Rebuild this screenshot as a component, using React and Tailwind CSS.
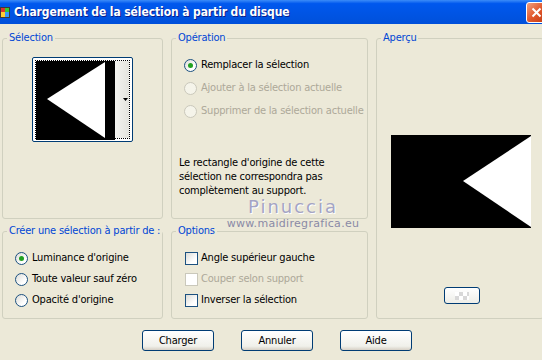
import React from 'react';

const font = { fontFamily: '"DejaVu Sans Condensed", "Liberation Sans", sans-serif' };

const Radio = ({ checked, disabled, label }) => (
  <div className={`flex items-center h-[16px] gap-[4px] whitespace-nowrap ${disabled ? 'text-[#ACA899]' : 'text-black'}`}>
    <span
      className={`w-[13px] h-[13px] rounded-full border flex items-center justify-center shrink-0 ${
        disabled
          ? 'border-[#CAC8BB] bg-[#F5F4EA]'
          : 'border-[#1C5180] bg-[linear-gradient(135deg,#DCDCD7,#FFFFFF_70%)]'
      }`}
    >
      {checked && <span className="w-[5px] h-[5px] rounded-full bg-[#21A121]" />}
    </span>
    <span>{label}</span>
  </div>
);

const Check = ({ disabled, label }) => (
  <div className={`flex items-center h-[16px] gap-[3px] whitespace-nowrap ${disabled ? 'text-[#ACA899]' : 'text-black'}`}>
    <span
      className={`w-[13px] h-[13px] border shrink-0 ${
        disabled
          ? 'border-[#CAC8BB] bg-white'
          : 'border-[#1C5180] bg-[linear-gradient(135deg,#DCDCD7,#FFFFFF_70%)]'
      }`}
    />
    <span>{label}</span>
  </div>
);

const Group = ({ title, className = '', children }) => (
  <fieldset className={`border border-[#D0D0BF] rounded-[3px] min-w-0 ${className}`}>
    <legend className="ml-[4px] px-[2px] text-[#0046D5] leading-[14px] whitespace-nowrap">{title}</legend>
    {children}
  </fieldset>
);

const XpButton = ({ children }) => (
  <button className="w-[72px] h-[21px] rounded-[3px] border border-[#003C74] bg-[linear-gradient(to_bottom,#FFFFFF,#F0F0EA_80%,#D6D0C5)] text-black leading-none">
    {children}
  </button>
);

export default function App() {
  return (
    <div className="w-[542px] h-[360px] overflow-hidden bg-[#ECE9D8] text-[11px] tracking-[-0.2px]" style={font}>
      {/* title bar */}
      <div className="h-[24px] flex items-center justify-between bg-[linear-gradient(to_bottom,#3C8CF8,#0058EE_15%,#0054E3_60%,#0050DA)]">
        <div className="flex items-center gap-[3px]">
          <svg width="11" height="13" viewBox="0 0 11 13">
            <rect x="0" y="1" width="10" height="11" fill="#3a3a3a" />
            <rect x="1" y="2" width="4" height="4" fill="#d33" />
            <rect x="5" y="2" width="4" height="4" fill="#3c3" />
            <rect x="1" y="6" width="4" height="5" fill="#fc3" />
            <rect x="5" y="6" width="4" height="5" fill="#39f" />
          </svg>
          <span
            className="text-white font-bold text-[12px] tracking-[-0.1px]"
            style={{ textShadow: '1px 1px #0A1E8C' }}
          >
            Chargement de la sélection à partir du disque
          </span>
        </div>
        <div className="w-[21px] h-[21px] mr-[-5px] rounded-[3px] border border-white bg-[linear-gradient(135deg,#F0A080,#E2582C_50%,#C13A12)] flex items-center justify-center">
          <svg width="11" height="11" viewBox="0 0 11 11">
            <path d="M1.5 1.5 L9.5 9.5 M9.5 1.5 L1.5 9.5" stroke="white" strokeWidth="2" />
          </svg>
        </div>
      </div>

      {/* body */}
      <div className="relative pt-[7px] pl-[2px]">
        <div className="grid grid-cols-[161px_197px_168px] grid-rows-[188px_95px] gap-x-[8px] gap-y-[5px]">
          <Group title="Sélection">
            <div className="ml-[29px] mt-[12px] w-[101px] h-[85px] rounded-[2px] border border-[#003C74] bg-white p-[2px]">
              <div className="w-full h-full border border-dotted border-black flex">
                <svg width="79" height="79" viewBox="0 0 79 79" className="shrink-0">
                  <rect width="79" height="79" fill="black" />
                  <polygon points="11,38 69,1 69,77" fill="white" />
                </svg>
                <div className="flex-1 bg-[linear-gradient(to_right,#F4F4F0,#E4E4DE)] flex items-center justify-end pr-[1px]">
                  <svg width="5" height="3" viewBox="0 0 5 3">
                    <polygon points="0,0 5,0 2.5,3" fill="black" />
                  </svg>
                </div>
              </div>
            </div>
          </Group>

          <Group title="Opération">
            <div className="ml-[12px] mt-[12px] flex flex-col gap-[7px]">
              <Radio checked label="Remplacer la sélection" />
              <Radio disabled label="Ajouter à la sélection actuelle" />
              <Radio disabled label="Supprimer de la sélection actuelle" />
            </div>
            <p className="ml-[7px] mt-[37px] leading-[14px] text-black whitespace-nowrap">
              Le rectangle d'origine de cette
              <br />
              sélection ne correspondra pas
              <br />
              complètement au support.
            </p>
          </Group>

          <Group title="Aperçu" className="row-span-2">
            <div className="flex flex-col items-center">
              <svg width="140" height="93" viewBox="0 0 140 93" className="mt-[90px] ml-[2px]">
                <rect width="140" height="93" fill="black" />
                <polygon points="140,1 72,46 140,92" fill="white" />
              </svg>
              <div className="mt-[59px] ml-[4px] w-[36px] h-[17px] rounded-[3px] border border-[#003C74] bg-[linear-gradient(to_bottom,#FFFFFF,#EEEEE8)] flex items-center justify-center">
                <div className="w-[14px] h-[8px] bg-[repeating-conic-gradient(#D8D8D8_0_25%,#FFFFFF_0_50%)] bg-[length:8px_8px]" />
              </div>
            </div>
          </Group>

          <Group title="Créer une sélection à partir de :">
            <div className="ml-[12px] mt-[12px] flex flex-col gap-[5px]">
              <Radio checked label="Luminance d'origine" />
              <Radio label="Toute valeur sauf zéro" />
              <Radio label="Opacité d'origine" />
            </div>
          </Group>

          <Group title="Options">
            <div className="ml-[13px] mt-[12px] flex flex-col gap-[5px]">
              <Check label="Angle supérieur gauche" />
              <Check disabled label="Couper selon support" />
              <Check label="Inverser la sélection" />
            </div>
          </Group>
        </div>

        <div className="flex gap-[27px] ml-[140px] mt-[11px]">
          <XpButton>Charger</XpButton>
          <XpButton>Annuler</XpButton>
          <XpButton>Aide</XpButton>
        </div>

        {/* watermark overlay */}
        <div className="absolute left-[232px] top-[174px] w-[122px] flex flex-col items-center pointer-events-none">
          <span
            className="text-[18px] leading-[18px] tracking-[2px] text-[#A4A4C4]"
            style={{ fontFamily: '"DejaVu Sans", sans-serif', textShadow: '1px 1px #FFFFFF' }}
          >
            Pinuccia
          </span>
          <span className="mt-[2px] text-[11px] leading-[12px] text-[#8A8AA6] tracking-[0.3px]" style={{ fontFamily: '"DejaVu Sans", sans-serif' }}>
            www.maidiregrafica.eu
          </span>
        </div>
      </div>
    </div>
  );
}
